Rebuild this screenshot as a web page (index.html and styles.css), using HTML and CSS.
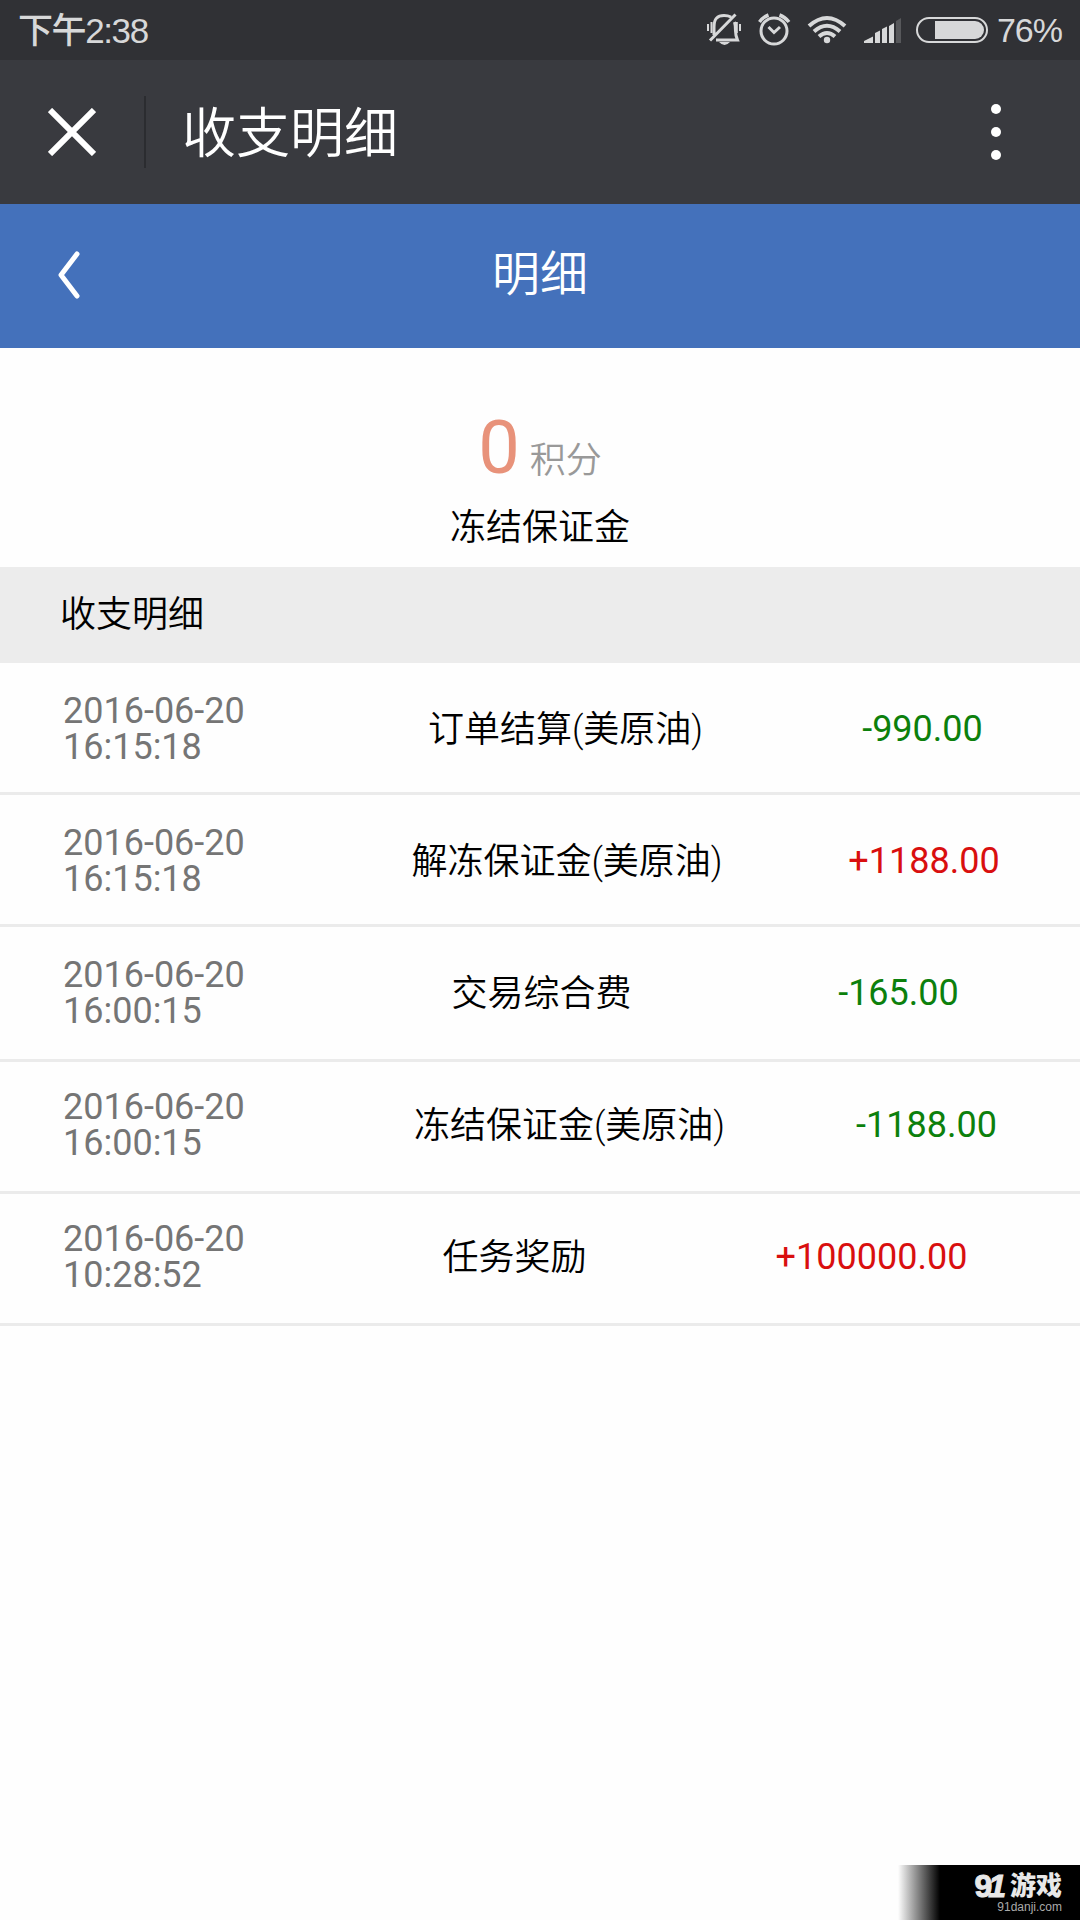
FILE: index.html
```
<!DOCTYPE html>
<html lang="zh-CN">
<head>
    <meta charset="UTF-8">
    <meta name="viewport" content="width=device-width, initial-scale=1.0">
    <title>收支明细</title>
    <link rel="stylesheet" href="styles.css">
</head>
<body>
    <div class="status-bar">
        <span class="time">下午2:38</span>
        <!-- 静音 闹钟 wifi 信号 电池 -->
        <svg class="status-icons" width="284" height="60" viewBox="704 0 284 60">
            <g fill="none" stroke="#d7d8d9" stroke-width="3">
                <path d="M714 35V27C714 19 717 15.500 724 15.500Q728 15.500 731 17M734.500 22Q735.500 25 735.500 31Q735.500 35 737.500 40H716M710 40.5L735.500 14.5"/>
                <path d="M708 24V31M711.500 22V33M740 24V31M736.800 22V33" stroke-width="2"/>
                <path d="M719 42H730Q724.500 48 719 42Z" fill="#d7d8d9" stroke="none"/>
                <circle cx="774" cy="31" r="13"/>
                <path d="M768.500 27L774 32.500L780 27" stroke-width="3"/>
                <path d="M759.500 22Q763 17 768.500 15M779.500 15Q785 17 789 22" stroke-width="3.500"/>
                <path d="M809 26Q827 10 845 26M814 31.500Q827 20 840 31.500M819 36.500Q827 29.500 835 36.500" stroke-width="4"/>
                <circle cx="827" cy="40" r="3.200" fill="#d7d8d9" stroke="none"/>
                <rect x="917" y="18" width="70" height="24" rx="12" stroke-width="2"/>
            </g>
            <g fill="#d7d8d9">
                <path d="M864 43V41L873 36.500V43ZM875 43V33L880 30.500V43ZM882 43V29L887 26.500V43ZM889 43V26L894 23V43Z"/>
                <path d="M896 43V21L901 18V43Z" fill="#57585b"/>
                <path d="M935 21H975A9 9 0 0 1 975 39H935Z"/>
            </g>
        </svg>
        <span class="battery">76%</span>
    </div>

    <div class="title-bar">
        <svg class="close" width="48" height="48" viewBox="0 0 48 48">
            <path d="M2 2L46 46M46 2L2 46" stroke="#fff" stroke-width="6"/>
        </svg>
        <div class="divider"></div>
        <div class="page-title">收支明细</div>
        <div class="more"><i></i><i></i><i></i></div>
    </div>

    <div class="nav">
        <svg class="back" width="24" height="48" viewBox="0 0 24 48">
            <path d="M20 3L4 24L20 45" fill="none" stroke="#fff" stroke-width="5" stroke-linecap="round" stroke-linejoin="round"/>
        </svg>
        <div class="nav-title">明细</div>
    </div>

    <div class="summary">
        <div class="score"><span class="num">0</span><span class="unit">积分</span></div>
        <div class="label">冻结保证金</div>
    </div>

    <div class="section-title">收支明细</div>
    <div class="list">
        <div class="row row-1">
            <div class="date">2016-06-20<br>16:15:18</div>
            <div class="name">订单结算(美原油)</div>
            <div class="amount out">-990.00</div>
        </div>
        <div class="row row-2">
            <div class="date">2016-06-20<br>16:15:18</div>
            <div class="name">解冻保证金(美原油)</div>
            <div class="amount in">+1188.00</div>
        </div>
        <div class="row row-3">
            <div class="date">2016-06-20<br>16:00:15</div>
            <div class="name">交易综合费</div>
            <div class="amount out">-165.00</div>
        </div>
        <div class="row row-4">
            <div class="date">2016-06-20<br>16:00:15</div>
            <div class="name">冻结保证金(美原油)</div>
            <div class="amount out">-1188.00</div>
        </div>
        <div class="row row-5">
            <div class="date">2016-06-20<br>10:28:52</div>
            <div class="name">任务奖励</div>
            <div class="amount in">+100000.00</div>
        </div>
    </div>

    <div class="watermark">
        <div class="brand"><span class="brand-num">9<span class="one">1</span></span>游戏</div>
        <div class="site">91danji.com</div>
    </div>
</body>
</html>
```
FILE: styles.css
```
* {
    box-sizing: border-box;
}
body {
    margin: 0;
    height: 1920px;
    position: relative;
    overflow: hidden;
    background-color: #fefefe;
    color: #000;
    font-family: Roboto, "Noto Sans CJK SC", sans-serif;
    font-size: 36px;
}
.status-bar {
    display: flex;
    align-items: center;
    height: 60px;
    padding: 0 18px;
    background-color: #303135;
    color: #d7d8d9;
    font-family: "Liberation Sans", "Noto Sans CJK SC", sans-serif;
    font-size: 34px;
    line-height: 61px;
}
.time {
    font-size: 35px;
    font-weight: 500;
    letter-spacing: -1.4px;
}
.status-icons {
    margin-left: auto;
    margin-right: 9px;
}
.battery {
    letter-spacing: -1px;
}
.title-bar {
    display: flex;
    align-items: center;
    height: 144px;
    padding-left: 48px;
    padding-right: 79px;
    background-color: #393a3f;
    color: #fff;
}
.divider {
    width: 2px;
    height: 72px;
    margin-left: 48px;
    background-color: #2b2c30;
}
.page-title {
    margin-left: 36px;
    padding-bottom: 5px;
    font-size: 54px;
    font-weight: 350;
}
.more {
    display: flex;
    flex-direction: column;
    gap: 13px;
    margin-left: auto;
}
.more i {
    width: 10px;
    height: 10px;
    border-radius: 50%;
    background-color: #fff;
}
.nav {
    display: grid;
    grid-template-columns: 1fr auto 1fr;
    align-items: center;
    height: 144px;
    padding: 0 57px;
    background-color: #4471bb;
    color: #fff;
}
.back {
    margin-bottom: 3px;
}
.nav-title {
    font-size: 48px;
    font-weight: 350;
    line-height: 142px;
    padding-bottom: 2px;
}
.summary {
    height: 219px;
    padding-top: 58px;
    text-align: center;
}
.score {
    height: 85px;
    line-height: 84px;
}
.num {
    margin-right: 10px;
    color: #e8927a;
    font-size: 74px;
}
.unit {
    color: #999;
    font-weight: 350;
}
.label {
    font-weight: 350;
    line-height: 74px;
}
.section-title {
    height: 96px;
    padding-left: 60px;
    background-color: #ececec;
    font-weight: 350;
    line-height: 97px;
}
.row {
    display: flex;
    align-items: flex-start;
    height: 132px;
    padding-top: 30px;
    padding-left: 63px;
    padding-right: 6px;
    border-bottom: 3px solid #ebebeb;
}
.date {
    width: 297px;
    color: #757575;
    line-height: 36px;
}
.name,
.amount {
    text-align: center;
    line-height: 72px;
    white-space: nowrap;
}
.name {
    font-weight: 350;
    line-height: 74px;
}
.amount {
    flex: 1;
}
.in {
    color: #d90f0f;
}
.out {
    color: #0c800c;
}
.row-1 .name {
    width: 411px;
}
.row-2 .name {
    width: 414px;
}
.row-3 .name {
    width: 363px;
}
.row-4 .name {
    width: 419px;
}
.row-5 .name {
    width: 309px;
}
.row-3 {
    height: 135px;
}
.row-4,
.row-5 {
    padding-top: 27px;
}
.watermark {
    position: absolute;
    right: 0;
    bottom: 0;
    width: 182px;
    height: 55px;
    padding: 8px 18px 0 0;
    background: linear-gradient(to right, #fefefe, #000 42px);
    color: #e8e8e8;
    text-align: right;
}
.brand {
    display: flex;
    justify-content: flex-end;
    font-size: 26px;
    font-weight: 900;
    line-height: 27px;
}
.brand-num {
    margin-right: 4px;
    font-family: "Liberation Sans", sans-serif;
    font-size: 32px;
    font-weight: bold;
    -webkit-text-stroke: 1px #e8e8e8;
}
.one {
    font-style: italic;
    margin-left: -4px;
}
.site {
    color: #aaa;
    font-family: "Liberation Sans", sans-serif;
    font-size: 12px;
    line-height: 14px;
}
```
